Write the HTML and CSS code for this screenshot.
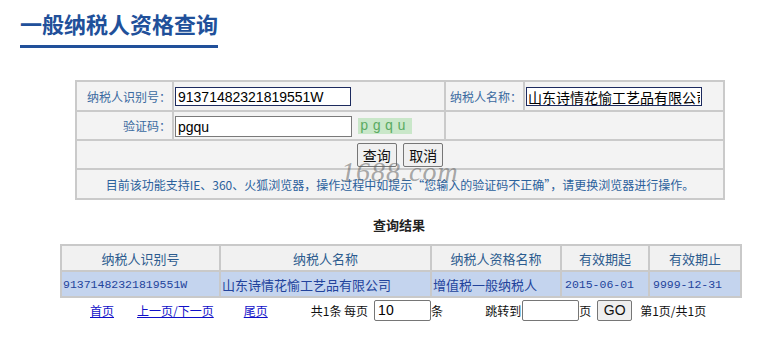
FILE: index.html
```html
<!DOCTYPE HTML>
<html lang="zh-CN">
<head>
    <title>一般纳税人资格查询</title>
    <meta charset="UTF-8">
    <link rel="stylesheet" href="styles.css">
</head>
<body>
<div class="page-head">
    <h1>一般纳税人资格查询</h1>
</div>
<div class="main">
    <div class="query-box">
        <table class="query">
            <colgroup>
                <col class="c1">
                <col class="c2">
                <col class="c3">
                <col class="c4">
            </colgroup>
            <tr class="row-a">
                <td class="lbl">纳税人识别号：</td>
                <td class="fld"><input class="txt txt-id" value="91371482321819551W"></td>
                <td class="lbl">纳税人名称：</td>
                <td class="fld"><input class="txt txt-name" value="山东诗情花愉工艺品有限公司"></td>
            </tr>
            <tr class="row-b">
                <td class="lbl">验证码：</td>
                <td class="fld"><input class="txt txt-code" value="pgqu"><span class="captcha">pgqu</span></td>
                <td colspan="2"></td>
            </tr>
            <tr class="row-c">
                <td colspan="4" class="actions">
                    <button class="btn">查询</button>
                    <button class="btn">取消</button>
                </td>
            </tr>
            <tr class="row-d">
                <td colspan="4" class="hint">目前该功能支持IE、360、火狐浏览器，操作过程中如提示“您输入的验证码不正确”，请更换浏览器进行操作。</td>
            </tr>
        </table>
        <div class="watermark">1688.com</div>
    </div>

    <div class="result-title">查询结果</div>

    <table class="result">
        <colgroup>
            <col class="r1">
            <col class="r2">
            <col class="r3">
            <col class="r4">
            <col class="r5">
        </colgroup>
        <tr class="head">
            <th>纳税人识别号</th>
            <th>纳税人名称</th>
            <th>纳税人资格名称</th>
            <th>有效期起</th>
            <th>有效期止</th>
        </tr>
        <tr class="data">
            <td class="num">91371482321819551W</td>
            <td>山东诗情花愉工艺品有限公司</td>
            <td>增值税一般纳税人</td>
            <td class="num">2015-06-01</td>
            <td class="num">9999-12-31</td>
        </tr>
    </table>

    <div class="pager">
        <a class="first" href="#">首页</a>
        <a class="prevnext" href="#">上一页/下一页</a>
        <a class="last" href="#">尾页</a>
        <span class="total">共1条 每页</span>
        <input class="pg-input size" value="10">
        <span>条</span>
        <span class="jump">跳转到</span>
        <input class="pg-input goto" value="">
        <span>页</span>
        <button class="go">GO</button>
        <span class="count">第1页/共1页</span>
    </div>
</div>
</body>
</html>
```

FILE: styles.css
```css
* {
    box-sizing: border-box;
}

body {
    margin: 0;
    background: #fff;
    font-family: "Noto Sans CJK SC", "Noto Sans", sans-serif;
    color: #222;
}

.page-head {
    padding: 8px 0 0 20px;
}

.page-head h1 {
    display: inline-block;
    margin: 0;
    padding-bottom: 7px;
    font-size: 22px;
    line-height: 30px;
    font-weight: bold;
    color: #21509a;
    border-bottom: 3px solid #21509a;
}

.main {
    width: 680px;
    margin: 32px 0 0 60px;
}

/* query form */

.query-box {
    position: relative;
    width: 648px;
    margin-left: 15px;
}

.query {
    width: 648px;
    border-collapse: collapse;
    table-layout: fixed;
    background: #f3f3f3;
}

.query .c1 { width: 97px; }
.query .c2 { width: 272px; }
.query .c3 { width: 79px; }
.query .c4 { width: 200px; }

.query td {
    border: 2px solid #cacaca;
    padding: 0;
    font-size: 12px;
    white-space: nowrap;
}

.query .row-a td { height: 30px; }
.query .row-b td { height: 29px; }
.query .row-c td { height: 29px; }
.query .row-d td { height: 30px; }

.query .lbl {
    text-align: right;
    color: #3a6aa0;
    padding-right: 1px;
}

.query .fld {
    padding-left: 1px;
}

.txt {
    vertical-align: middle;
    height: 19px;
    padding: 0 2px;
    border: 1px solid #1c2a5e;
    background: #fff;
    color: #000;
    font-family: "Liberation Sans", "Noto Sans CJK SC", sans-serif;
    font-size: 14px;
    outline: none;
}

.txt-id { width: 176px; }

.txt-name {
    width: 176px;
    font-family: "Noto Sans CJK SC", sans-serif;
    padding: 0 1px;
}

.txt-code {
    width: 177px;
    height: 21px;
    border-color: #7a7a7a;
    margin-top: 2px;
}

.captcha {
    display: inline-block;
    vertical-align: middle;
    margin-left: 6px;
    padding: 0 2px;
    height: 16px;
    line-height: 16px;
    background: #c9e7c9;
    color: #5aaa62;
    font-family: "Liberation Mono", monospace;
    font-size: 14px;
    letter-spacing: 4px;
}

.actions {
    text-align: center;
}

.btn {
    height: 24px;
    padding: 0 5px;
    margin: 0 2px;
    font-family: "Noto Sans CJK SC", sans-serif;
    font-size: 14px;
    color: #111;
    background: #f0f0f0;
    border: 1px solid #767676;
    border-radius: 2px;
}

.hint {
    text-align: center;
    color: #2b619c;
}

.watermark {
    position: absolute;
    left: 266px;
    top: 76px;
    font-family: "Liberation Serif", serif;
    font-style: italic;
    font-size: 28px;
    letter-spacing: 1px;
    color: rgba(100, 100, 100, 0.55);
    pointer-events: none;
}

/* results */

.result-title {
    margin-top: 16px;
    padding-left: 313px;
    font-size: 13px;
    font-weight: bold;
    line-height: 18px;
    color: #222;
}

.result {
    margin-top: 10px;
    width: 680px;
    border-collapse: collapse;
    table-layout: fixed;
}

.result .r1 { width: 159px; }
.result .r2 { width: 211px; }
.result .r3 { width: 130px; }
.result .r4 { width: 88px; }
.result .r5 { width: 92px; }

.result th,
.result td {
    border: 2px solid #c9c9c9;
    height: 26px;
    padding: 0;
    font-size: 13px;
    white-space: nowrap;
}

.result th {
    background: #f1f1f1;
    font-weight: normal;
    color: #2d5c8f;
    text-align: center;
}

.result td {
    background: #c4d4ee;
    color: #22439c;
    padding-left: 1px;
    text-align: left;
}

.result td.num {
    font-family: "Liberation Mono", monospace;
    font-size: 11.5px;
}

.result td:nth-child(4),
.result td:nth-child(5) {
    padding-left: 3px;
}

/* pager */

.pager {
    display: flex;
    align-items: center;
    height: 22px;
    margin-top: 1px;
    font-size: 12px;
    color: #111;
}

.pager a {
    color: #1010c8;
    text-decoration: underline;
}

.pager .first { margin-left: 30px; }
.pager .prevnext { margin-left: 23px; }
.pager .last { margin-left: 30px; }
.pager .total { margin-left: 43px; }
.pager .jump { margin-left: 42px; }
.pager .count { margin-left: 8px; }

.pg-input {
    height: 21px;
    padding: 0 3px;
    border: 1px solid #767676;
    border-radius: 2px;
    font-family: "Liberation Sans", sans-serif;
    font-size: 14px;
    background: #fff;
}

.pg-input.size {
    width: 57px;
    margin-left: 6px;
}

.pg-input.goto {
    width: 57px;
    margin-left: 1px;
}

.go {
    margin-left: 6px;
    width: 35px;
    height: 21px;
    padding: 0;
    font-family: "Liberation Sans", sans-serif;
    font-size: 14px;
    background: #efefef;
    border: 1px solid #767676;
    border-radius: 2px;
    color: #111;
}
```
